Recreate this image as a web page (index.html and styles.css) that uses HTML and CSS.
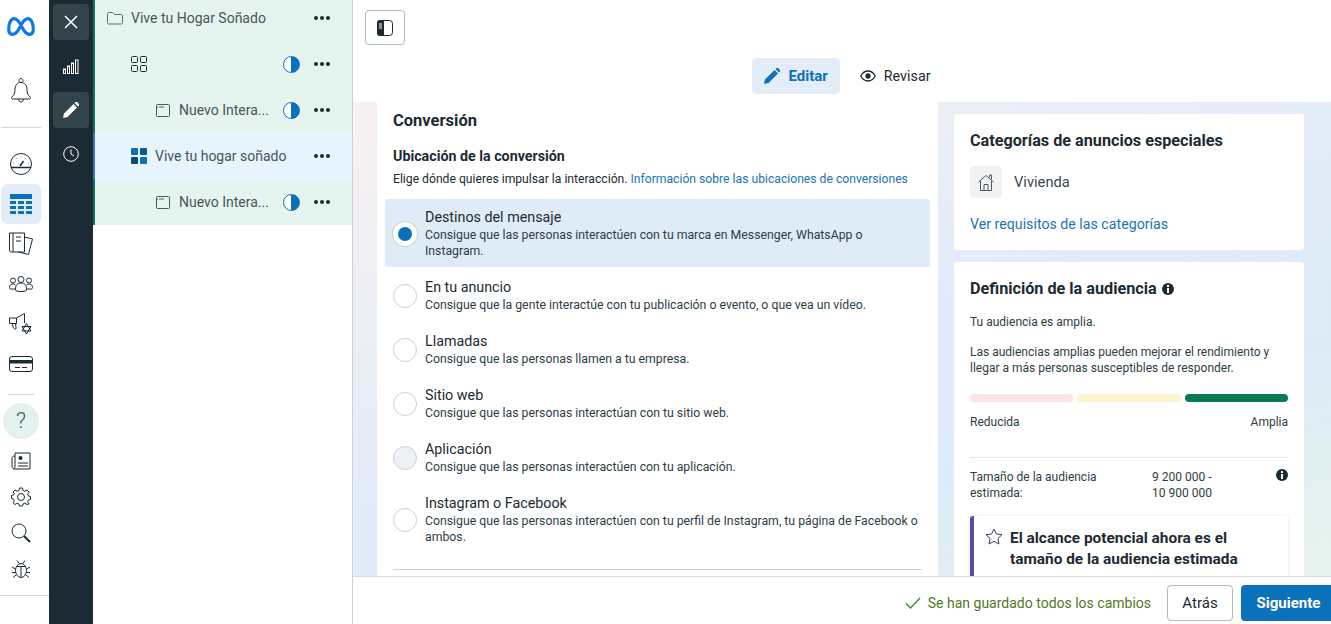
FILE: index.html
```html
<!DOCTYPE html>
<html lang="es">
<head>
    <meta charset="UTF-8">
    <meta name="viewport" content="width=device-width, initial-scale=1.0">
    <title>Ads Manager</title>
    <link rel="stylesheet" href="styles.css">
</head>
<body>
    <!-- Global nav -->
    <nav class="nav">
        <div class="nav-logo">
            <svg width="28" height="19" viewBox="0 0 28 19"><path d="M1.7 12C1.7 6 4 1.7 7.3 1.7c3.2 0 5.7 4.3 8.200 9.300 2 4 4 6.300 7 6.300 2.500 0 3.800-2.300 3.800-5.300 0-6-2.300-10.300-5.600-10.300-3.200 0-5.700 4.300-8.200 9.300-2 4-4 6.300-7 6.300-2.500 0-3.800-2.300-3.800-5.300z" fill="none" stroke="#0a78e8" stroke-width="3.2"/></svg>
        </div>
        <div class="nav-item nav-bell">
            <svg class="icon" width="24" height="26" viewBox="0 0 24 26"><path d="M12 4.500c-4 0-6 3-6 7 0 4-1 5.500-3.500 8 0 1 .5 1.500 1.500 1.500h16c1 0 1.500-.5 1.500-1.500-2.500-2.500-3.500-4-3.500-8 0-4-2-7-6-7zM9.500 21c0 4 5 4 5 0M12 4.500a2 2 0 1 1 .01 0"/></svg>
        </div>
        <hr class="nav-line nav-line-wide">
        <div class="nav-item nav-gauge">
            <svg class="icon" width="24" height="24" viewBox="0 0 24 24"><circle cx="12" cy="12" r="10.5"/><path d="M2 15.500h20M11 14l3.500-5" stroke-width="1.6"/><path d="M12 4v.5M7 6l.4.4M17 6l-.4.4M4.500 11h.5M19 11h.5"/></svg>
        </div>
        <div class="nav-item nav-active">
            <svg width="24" height="20" viewBox="0 0 24 20" fill="#0b72b9"><rect x="1" y="0" width="22" height="5"/><rect x="1" y="7" width="6" height="3"/><rect x="9" y="7" width="6" height="3"/><rect x="17" y="7" width="6" height="3"/><rect x="1" y="12" width="6" height="3"/><rect x="9" y="12" width="6" height="3"/><rect x="17" y="12" width="6" height="3"/><rect x="1" y="17" width="6" height="3"/><rect x="9" y="17" width="6" height="3"/><rect x="17" y="17" width="6" height="3"/></svg>
        </div>
        <div class="nav-item">
            <svg class="icon" width="24" height="24" viewBox="0 0 24 24"><path d="M.5 1h15v19H2.500a2 2 0 0 1-2-2zM4 1v19M7 5h5M7 9h5M15.500 5l8 2-4 15.500-10-2.500"/></svg>
        </div>
        <div class="nav-item">
            <svg class="icon" width="24" height="16" viewBox="0 0 24 16"><circle cx="12" cy="3.500" r="3"/><circle cx="4" cy="4.500" r="2.500"/><circle cx="20" cy="4.500" r="2.500"/><path d="M6.500 14c0-5.500 2-7 5.500-7s5.500 1.500 5.500 7c0 2-11 2-11 0zM6.500 13H2c-1 0-1.500-.5-1.500-1.500C.5 9 2 8 4 8c1 0 2 .3 2.500 1M17.500 13H22c1 0 1.500-.5 1.500-1.500C23.500 9 22 8 20 8c-1 0-2 .3-2.500 1"/></svg>
        </div>
        <div class="nav-item">
            <svg class="icon" width="24" height="22" viewBox="0 0 24 22"><path d="M.5 5h7l8-4.500V10M.5 5v5.500h7M7.500 5v5.500M3.500 10.500c0 3 1 5 2.500 5.500 1 .3 1.500-.5 1-1.500l-.5-4"/><path d="M17.500 10.500l4.500 7.500h-9zM17.500 21L13 13.500h9z"/></svg>
        </div>
        <div class="nav-item">
            <svg class="icon" width="24" height="16" viewBox="0 0 24 16"><rect x=".5" y=".5" width="23" height="15" rx="2.5"/><rect x="1" y="4" width="22" height="3.5" fill="#1c2b33" stroke="none"/><path d="M6 11.500h5M13 11.500h5"/></svg>
        </div>
        <hr class="nav-line nav-line-short">
        <div class="nav-help">?</div>
        <div class="nav-item nav-small">
            <svg class="icon" width="20" height="18" viewBox="0 0 20 18"><path d="M4 1h15v16H4c-2 0-3-1-3-3V6c0-1 1-2 3-2M4 1v14c0 1-1 2-1.500 2"/><circle cx="9.5" cy="6" r="2" fill="#1c2b33" stroke="none"/><path d="M7 11h10M7 14h10"/></svg>
        </div>
        <div class="nav-item nav-small">
            <svg class="icon" width="20" height="20" viewBox="0 0 20 20"><circle cx="10" cy="10" r="3.5"/><path d="M8.500 1h3l.5 2.500 1.800.8L16 3l2 2.200-1.300 2 .7 1.800 2.100.5v3l-2.100.5-.7 1.800 1.300 2L16 17.500l-2.200-1.300-1.800.8-.5 2h-3l-.5-2-1.800-.8L4 17.500 2 15.800l1.300-2-.7-1.800-2.100-.5v-3l2.100-.5.7-1.800L2 5.200 4 3l2.200 1.300L8 3.500z"/></svg>
        </div>
        <div class="nav-item nav-small">
            <svg class="icon" width="20" height="20" viewBox="0 0 20 20"><circle cx="8" cy="8" r="7"/><path d="M13 13l6 6" stroke-width="2"/></svg>
        </div>
        <div class="nav-item nav-small">
            <svg class="icon" width="20" height="20" viewBox="0 0 20 20"><ellipse cx="10" cy="11.5" rx="5.5" ry="7"/><path d="M5 7.500h10M10 7.500V18.500M6 1.500l2 3M14 1.500l-2 3M4.500 10L1 8M15.500 10L19 8M4.500 13.500H1M15.500 13.500H19M5 16l-3 2.500M15 16l3 2.500"/></svg>
        </div>
        <hr class="nav-line nav-line-end">
    </nav>

    <!-- Editor rail -->
    <aside class="rail">
        <div class="rail-btn rail-on">
            <svg width="14" height="14" viewBox="0 0 14 14"><path d="M1 1l12 12M13 1L1 13" stroke="#fff" stroke-width="1.5"/></svg>
        </div>
        <div class="rail-btn">
            <svg width="16" height="15" viewBox="0 0 16 15" fill="none" stroke="#fff"><rect x=".5" y="10" width="2" height="4.5"/><rect x="4.5" y="7" width="2" height="7.5"/><rect x="8.5" y="4" width="2" height="10.5"/><rect x="12.5" y="1" width="2.5" height="13.5"/></svg>
        </div>
        <div class="rail-btn rail-on">
            <svg width="16" height="16" viewBox="0 0 16 16" fill="#fff"><path d="M0 16l1-4.500L10.500 2l3.500 3.500L4.500 15zM11.500 1l1-1c.5-.3 1-.3 1.500 0l2 2c.3.5.3 1 0 1.500l-1 1z"/></svg>
        </div>
        <div class="rail-btn">
            <svg width="16" height="16" viewBox="0 0 16 16" fill="none" stroke="#fff"><circle cx="8" cy="8" r="7.3"/><path d="M8 3.500V8l3 2"/></svg>
        </div>
    </aside>

    <!-- Campaign tree -->
    <section class="tree">
        <div class="tree-list">
            <div class="tree-row tree-row-first">
                <svg class="tree-icon" width="16" height="13" viewBox="0 0 16 13" fill="none" stroke="#5d6a72"><path d="M.5 2c0-1 .5-1.500 1.500-1.500h3.500l2 2H14c1 0 1.500.5 1.500 1.500v6.500c0 1-.5 1.500-1.500 1.500H2c-1 0-1.500-.5-1.500-1.500z"/></svg>
                <span class="tree-name">Vive tu Hogar Soñado</span>
                <span class="tree-dots"><i></i><i></i><i></i></span>
            </div>
            <div class="tree-row level-1">
                <svg class="tree-icon" width="16" height="16" viewBox="0 0 16 16" fill="none" stroke="#1c2b33"><rect x=".5" y=".5" width="6" height="6" rx="1"/><rect x="9.5" y=".5" width="6" height="6" rx="1"/><rect x=".5" y="9.5" width="6" height="6" rx="1"/><rect x="9.5" y="9.5" width="6" height="6" rx="1"/></svg>
                <span class="tree-name"></span>
                <span class="half-dot"></span>
                <span class="tree-dots"><i></i><i></i><i></i></span>
            </div>
            <div class="tree-row level-2">
                <svg class="tree-icon" width="14" height="13" viewBox="0 0 14 13" fill="none" stroke="#4b5860"><rect x=".5" y=".5" width="13" height="12" rx="1"/><path d="M1 3h1M3 3h5"/></svg>
                <span class="tree-name">Nuevo Intera...</span>
                <span class="half-dot"></span>
                <span class="tree-dots"><i></i><i></i><i></i></span>
            </div>
            <div class="tree-row level-1 tree-row-current">
                <svg class="tree-icon" width="16" height="16" viewBox="0 0 16 16"><rect width="7" height="7" rx="1" fill="#0b72b9"/><rect x="9" width="7" height="7" rx="1" fill="#0c5a94"/><rect y="9" width="7" height="7" rx="1" fill="#0c4a7c"/><rect x="9" y="9" width="7" height="7" rx="1" fill="#0b72b9"/></svg>
                <span class="tree-name">Vive tu hogar soñado</span>
                <span class="tree-dots"><i></i><i></i><i></i></span>
            </div>
            <div class="tree-row level-2">
                <svg class="tree-icon" width="14" height="13" viewBox="0 0 14 13" fill="none" stroke="#4b5860"><rect x=".5" y=".5" width="13" height="12" rx="1"/><path d="M1 3h1M3 3h5"/></svg>
                <span class="tree-name">Nuevo Intera...</span>
                <span class="half-dot"></span>
                <span class="tree-dots"><i></i><i></i><i></i></span>
            </div>
        </div>
    </section>

    <main class="main">
        <header class="toolbar">
            <button class="panel-toggle">
                <svg width="16" height="16" viewBox="0 0 16 16"><rect x=".5" y=".5" width="15" height="15" rx="3" fill="#fff" stroke="#1c2b33"/><path d="M3 0h4v16H3a3 3 0 0 1-3-3V3a3 3 0 0 1 3-3z" fill="#1c2b33"/><path d="M2 4h3M2 6h3M2 8h3" stroke="#fff"/></svg>
            </button>
            <div class="tabs">
                <div class="tab tab-on">
                    <svg width="16" height="16" viewBox="0 0 16 16" fill="#0b72b9"><path d="M0 16l1-4.500L10.500 2l3.500 3.500L4.500 15zM11.500 1l1-1c.5-.3 1-.3 1.500 0l2 2c.3.5.3 1 0 1.500l-1 1z"/></svg>
                    Editar
                </div>
                <div class="tab">
                    <svg width="16" height="12" viewBox="0 0 16 12" fill="none" stroke="#1c2b33" stroke-width="1.3"><path d="M.8 6C2.500 2.800 5 1 8 1s5.500 1.800 7.200 5C13.500 9.200 11 11 8 11S2.500 9.200.8 6z"/><circle cx="8" cy="6" r="2" fill="#1c2b33"/></svg>
                    Revisar
                </div>
            </div>
        </header>

        <div class="content">
            <div class="form-card">
                <h2 class="form-title">Conversión</h2>
                <h3 class="form-sub">Ubicación de la conversión</h3>
                <p class="form-desc">Elige dónde quieres impulsar la interacción. <a class="link">Información sobre las ubicaciones de conversiones</a></p>

                <div class="options">
                    <div class="option option-on">
                        <span class="radio radio-on"></span>
                        <div class="option-text">
                            <div class="option-name">Destinos del mensaje</div>
                            <div class="option-desc">Consigue que las personas interactúen con tu marca en Messenger, WhatsApp o Instagram.</div>
                        </div>
                    </div>
                    <div class="option">
                        <span class="radio"></span>
                        <div class="option-text">
                            <div class="option-name">En tu anuncio</div>
                            <div class="option-desc">Consigue que la gente interactúe con tu publicación o evento, o que vea un vídeo.</div>
                        </div>
                    </div>
                    <div class="option">
                        <span class="radio"></span>
                        <div class="option-text">
                            <div class="option-name">Llamadas</div>
                            <div class="option-desc">Consigue que las personas llamen a tu empresa.</div>
                        </div>
                    </div>
                    <div class="option">
                        <span class="radio"></span>
                        <div class="option-text">
                            <div class="option-name">Sitio web</div>
                            <div class="option-desc">Consigue que las personas interactúan con tu sitio web.</div>
                        </div>
                    </div>
                    <div class="option">
                        <span class="radio radio-off"></span>
                        <div class="option-text">
                            <div class="option-name">Aplicación</div>
                            <div class="option-desc">Consigue que las personas interactúen con tu aplicación.</div>
                        </div>
                    </div>
                    <div class="option">
                        <span class="radio"></span>
                        <div class="option-text">
                            <div class="option-name">Instagram o Facebook</div>
                            <div class="option-desc">Consigue que las personas interactúen con tu perfil de Instagram, tu página de Facebook o ambos.</div>
                        </div>
                    </div>
                </div>
                <hr class="form-line">
            </div>

            <div class="side">
                <div class="card card-special">
                    <h2 class="card-title">Categorías de anuncios especiales</h2>
                    <div class="special-row">
                        <span class="special-icon">
                            <svg width="16" height="17" viewBox="0 0 16 17" fill="none" stroke="#4b5860"><path d="M.5 8L8 1.500 15.500 8M2.500 7v9.500h11V7M6 16.500v-6h4v6M11.500 3.500V1h2v4.500"/></svg>
                        </span>
                        Vivienda
                    </div>
                    <a class="link card-link">Ver requisitos de las categorías</a>
                </div>

                <div class="card card-audience">
                    <h2 class="card-title">Definición de la audiencia <span class="info"></span></h2>
                    <p class="card-text">Tu audiencia es amplia.</p>
                    <p class="card-text card-text-gap">Las audiencias amplias pueden mejorar el rendimiento y llegar a más personas susceptibles de responder.</p>
                    <div class="meter">
                        <span class="meter-low"></span>
                        <span class="meter-mid"></span>
                        <span class="meter-high"></span>
                    </div>
                    <div class="meter-labels"><span>Reducida</span><span>Amplia</span></div>
                    <div class="size-row">
                        <span class="size-label">Tamaño de la audiencia estimada:</span>
                        <span class="size-value">9 200 000 -<br>10 900 000</span>
                        <span class="info"></span>
                    </div>
                    <div class="notice">
                        <svg width="18" height="17" viewBox="0 0 18 17" fill="none" stroke="#3f3a78"><path d="M9 1l2.400 5 5.600.7-4.100 3.800 1.100 5.500L9 13.300 4 16l1.100-5.500L1 6.700 6.600 6z"/></svg>
                        <div class="notice-text">El alcance potencial ahora es el tamaño de la audiencia estimada</div>
                    </div>
                </div>
            </div>
        </div>

        <footer class="footer">
            <svg width="16" height="12" viewBox="0 0 16 12" fill="none" stroke="#3d8a2e" stroke-width="1.4"><path d="M1 6.500L5.500 11 15 1"/></svg>
            <span class="saved">Se han guardado todos los cambios</span>
            <button class="btn-back">Atrás</button>
            <button class="btn-next">Siguiente</button>
        </footer>
    </main>
</body>
</html>
```

FILE: styles.css
```css
* {
    box-sizing: border-box;
}

html, body {
    height: 100%;
}

body {
    margin: 0;
    display: flex;
    width: 1331px;
    height: 624px;
    overflow: hidden;
    background-color: #fff;
    color: #1c2b33;
    font-family: Roboto, 'Liberation Sans', sans-serif;
}

/* Global nav */
.nav {
    width: 49px;
    flex-shrink: 0;
    display: flex;
    flex-direction: column;
    align-items: center;
}

.icon {
    fill: none;
    stroke: #1c2b33;
    stroke-width: 1;
}

.nav-logo {
    height: 52px;
    display: flex;
    align-items: center;
    justify-content: center;
    width: 42px;
    margin-left: -7px;
}

.nav-item {
    width: 40px;
    height: 40px;
    margin-left: -7px;
    display: flex;
    align-items: center;
    justify-content: center;
    border-radius: 6px;
}

.nav-bell {
    margin-top: 19px;
}

.nav-gauge {
    margin-top: 16px;
}

.nav-active {
    background-color: #e2edf7;
}

.nav-small {
    height: 36px;
}

.nav-line {
    border: none;
    height: 1px;
    margin: 0;
    background-color: #d3d6d8;
}

.nav-line-wide {
    width: 40px;
    margin: 16px 8px 0 0;
}

.nav-line-short {
    width: 26px;
    margin: 10px 7px 8px 0;
}

.nav-line-end {
    width: 49px;
    margin-top: 8px;
}

.nav-help {
    width: 36px;
    height: 36px;
    margin: 0 7px 4px 0;
    border-radius: 50%;
    background-color: #e3f2ee;
    color: #4a5a60;
    font-size: 22px;
    font-weight: 300;
    line-height: 36px;
    text-align: center;
}

/* Editor rail */
.rail {
    width: 44px;
    flex-shrink: 0;
    background-color: #1c2b33;
    padding: 4px;
    display: flex;
    flex-direction: column;
    gap: 8px;
}

.rail-btn {
    width: 36px;
    height: 36px;
    display: flex;
    align-items: center;
    justify-content: center;
    border-radius: 4px;
}

.rail-on {
    background-color: #34444d;
}

/* Campaign tree */
.tree {
    width: 260px;
    flex-shrink: 0;
    border-right: 1px solid #cdd1d4;
}

.tree-list {
    background-color: #e6f4ef;
    border-left: 2px solid #0a7a5a;
}

.tree-row {
    height: 46px;
    display: flex;
    align-items: center;
    padding-left: 12px;
    padding-right: 22px;
    font-size: 14px;
    color: #46545c;
}

.tree-row-first {
    height: 41px;
    padding-bottom: 5px;
}

.level-1 {
    padding-left: 36px;
}

.level-2 {
    padding-left: 61px;
}

.tree-row-current {
    background-color: #e7f3fd;
    margin-left: -2px;
    padding-left: 36px;
    border-left: 2px solid #3b77c4;
}

.tree-icon {
    flex-shrink: 0;
    margin-right: 8px;
}

.level-2 .tree-icon {
    margin-right: 9px;
}

.tree-name {
    flex: 1;
    white-space: nowrap;
}

.half-dot {
    width: 17px;
    height: 17px;
    margin-right: 14px;
    border-radius: 50%;
    border: 1.5px solid #0b72b9;
    background: linear-gradient(90deg, #fff 50%, #0b72b9 50%);
}

.tree-dots {
    display: flex;
    gap: 2px;
    width: 16px;
}

.tree-dots i {
    width: 4px;
    height: 4px;
    border-radius: 50%;
    background-color: #1c2b33;
}

/* Main column */
.main {
    flex: 1;
    min-width: 0;
    display: flex;
    flex-direction: column;
}

.toolbar {
    height: 102px;
    flex-shrink: 0;
    padding: 10px 12px 0;
}

.panel-toggle {
    width: 40px;
    height: 35px;
    display: flex;
    align-items: center;
    justify-content: center;
    padding: 0;
    background-color: #fff;
    border: 1px solid #b4b9bc;
    border-radius: 4px;
}

.tabs {
    display: flex;
    justify-content: center;
    margin-top: 13px;
    gap: 8px;
    padding-left: 11px;
}

.tab {
    height: 36px;
    display: flex;
    align-items: center;
    gap: 8px;
    padding: 0 12px;
    font-size: 14.3px;
    border-radius: 4px;
}

.tab-on {
    background-color: #e2edf7;
    color: #0b72b9;
    font-size: 15px;
    font-weight: 700;
}

.content {
    flex: 1;
    min-height: 0;
    overflow: hidden;
    display: flex;
    gap: 16px;
    padding: 0 27px 0 24px;
    background: linear-gradient(160deg, #f9f1f1 0%, #e3ecf8 45%, #dcebf7 72%, #e8f3ed 100%);
}

/* Conversion form */
.form-card {
    width: 561px;
    flex-shrink: 0;
    background-color: #fff;
    padding: 8px 8px 0;
}

.form-title {
    margin: 1px 8px 0;
    font-size: 16.5px;
    line-height: 20px;
    font-weight: 700;
}

.form-sub {
    margin: 15px 8px 0;
    font-size: 14.25px;
    line-height: 20px;
    font-weight: 700;
}

.form-desc {
    margin: 5px 8px 0;
    font-size: 12.17px;
    line-height: 16px;
}

.link {
    color: #1b74b3;
}

.options {
    margin-top: 12px;
    display: flex;
    flex-direction: column;
}

.option {
    display: flex;
    align-items: center;
    gap: 8px;
    padding: 0 8px;
    margin-bottom: 19px;
}

.option-on {
    background-color: #dfebf6;
    border-radius: 3px;
    padding: 9px 8px 8px;
    margin-bottom: 11px;
}

.option-text {
    width: 495px;
}

.radio {
    width: 24px;
    height: 24px;
    flex-shrink: 0;
    border-radius: 50%;
    border: 1px solid #ced0d4;
    background-color: #fff;
}

.radio-on {
    border: 5px solid #fff;
    background-color: #0b72b9;
    box-shadow: 0 0 0 1px #ced0d4;
}

.radio-off {
    background-color: #eef1f5;
}

.option-name {
    font-size: 14.3px;
    line-height: 18px;
}

.option-desc {
    font-size: 12.28px;
    line-height: 16px;
    margin-top: 1px;
    color: #2e3d45;
}

.form-line {
    border: none;
    height: 1px;
    margin: 5px 8px 0;
    background-color: #ced0d4;
}

/* Side cards */
.side {
    flex: 1;
    min-width: 0;
    padding-top: 12px;
    display: flex;
    flex-direction: column;
    gap: 12px;
}

.card {
    background-color: #fff;
    border-radius: 3px;
    padding: 17px 16px 16px;
    flex-shrink: 0;
}

.card-special {
    height: 136px;
}

.card-title {
    margin: 0;
    font-size: 16.2px;
    line-height: 20px;
    font-weight: 700;
    display: flex;
    align-items: center;
    gap: 5px;
}

.special-row {
    margin-top: 15px;
    display: flex;
    align-items: center;
    gap: 12px;
    font-size: 14.7px;
    color: #3a4850;
}

.special-icon {
    width: 32px;
    height: 32px;
    display: flex;
    align-items: center;
    justify-content: center;
    background-color: #f1f3f5;
    border-radius: 4px;
}

.card-link {
    display: block;
    margin-top: 17px;
    font-size: 14.2px;
    line-height: 18px;
}

.info {
    width: 12px;
    height: 12px;
    flex-shrink: 0;
    border-radius: 50%;
    background-color: #1c2b33;
    position: relative;
}

.info::after {
    content: "";
    position: absolute;
    left: 5px;
    top: 2px;
    width: 2px;
    height: 8px;
    background: linear-gradient(#fff 2px, transparent 2px, transparent 3px, #fff 3px);
}

.card-text {
    margin: 15px 0 0;
    font-size: 12px;
    line-height: 16px;
    color: #2e3d45;
}

.card-text-gap {
    margin-top: 14px;
}

.meter {
    display: flex;
    gap: 4px;
    margin-top: 18px;
}

.meter span {
    flex: 1;
    height: 8px;
    border-radius: 4px;
}

.meter-low {
    background-color: #fde4e4;
}

.meter-mid {
    background-color: #fdf4cf;
}

.meter-high {
    background-color: #077a55;
}

.meter-labels {
    display: flex;
    justify-content: space-between;
    margin-top: 12px;
    font-size: 12px;
    line-height: 16px;
    color: #2e3d45;
}

.size-row {
    display: flex;
    margin-top: 27px;
    padding-top: 11px;
    border-top: 1px solid #e4e6e8;
    font-size: 12px;
    line-height: 16px;
    color: #2e3d45;
}

.size-label {
    width: 182px;
    padding-right: 40px;
}

.size-value {
    flex: 1;
}

.notice {
    margin-top: 15px;
    padding: 12px 12px 12px 11px;
    display: flex;
    gap: 7px;
    border-left: 4px solid #5f4ba6;
    border-radius: 3px;
    box-shadow: 0 0 3px rgba(0, 0, 0, 0.12);
}

.notice svg {
    flex-shrink: 0;
}

.notice-text {
    font-size: 15.4px;
    line-height: 21px;
    font-weight: 700;
}

/* Footer */
.footer {
    height: 48px;
    flex-shrink: 0;
    display: flex;
    align-items: center;
    justify-content: flex-end;
    padding-top: 4px;
    border-top: 1px solid #d7dadc;
    background-color: #fff;
    margin-right: -5px;
}

.saved {
    margin: 0 16px 0 7px;
    font-size: 14px;
    color: #4f7a23;
}

.btn-back,
.btn-next {
    height: 36px;
    font-family: inherit;
    font-size: 15px;
    border-radius: 4px;
    padding: 0;
}

.btn-back {
    width: 66px;
    margin-right: 8px;
    background-color: #fff;
    border: 1px solid #b4b9bc;
    color: #1c2b33;
}

.btn-next {
    width: 95px;
    background-color: #0b72b9;
    border: none;
    color: #fff;
    font-weight: 700;
}
```
